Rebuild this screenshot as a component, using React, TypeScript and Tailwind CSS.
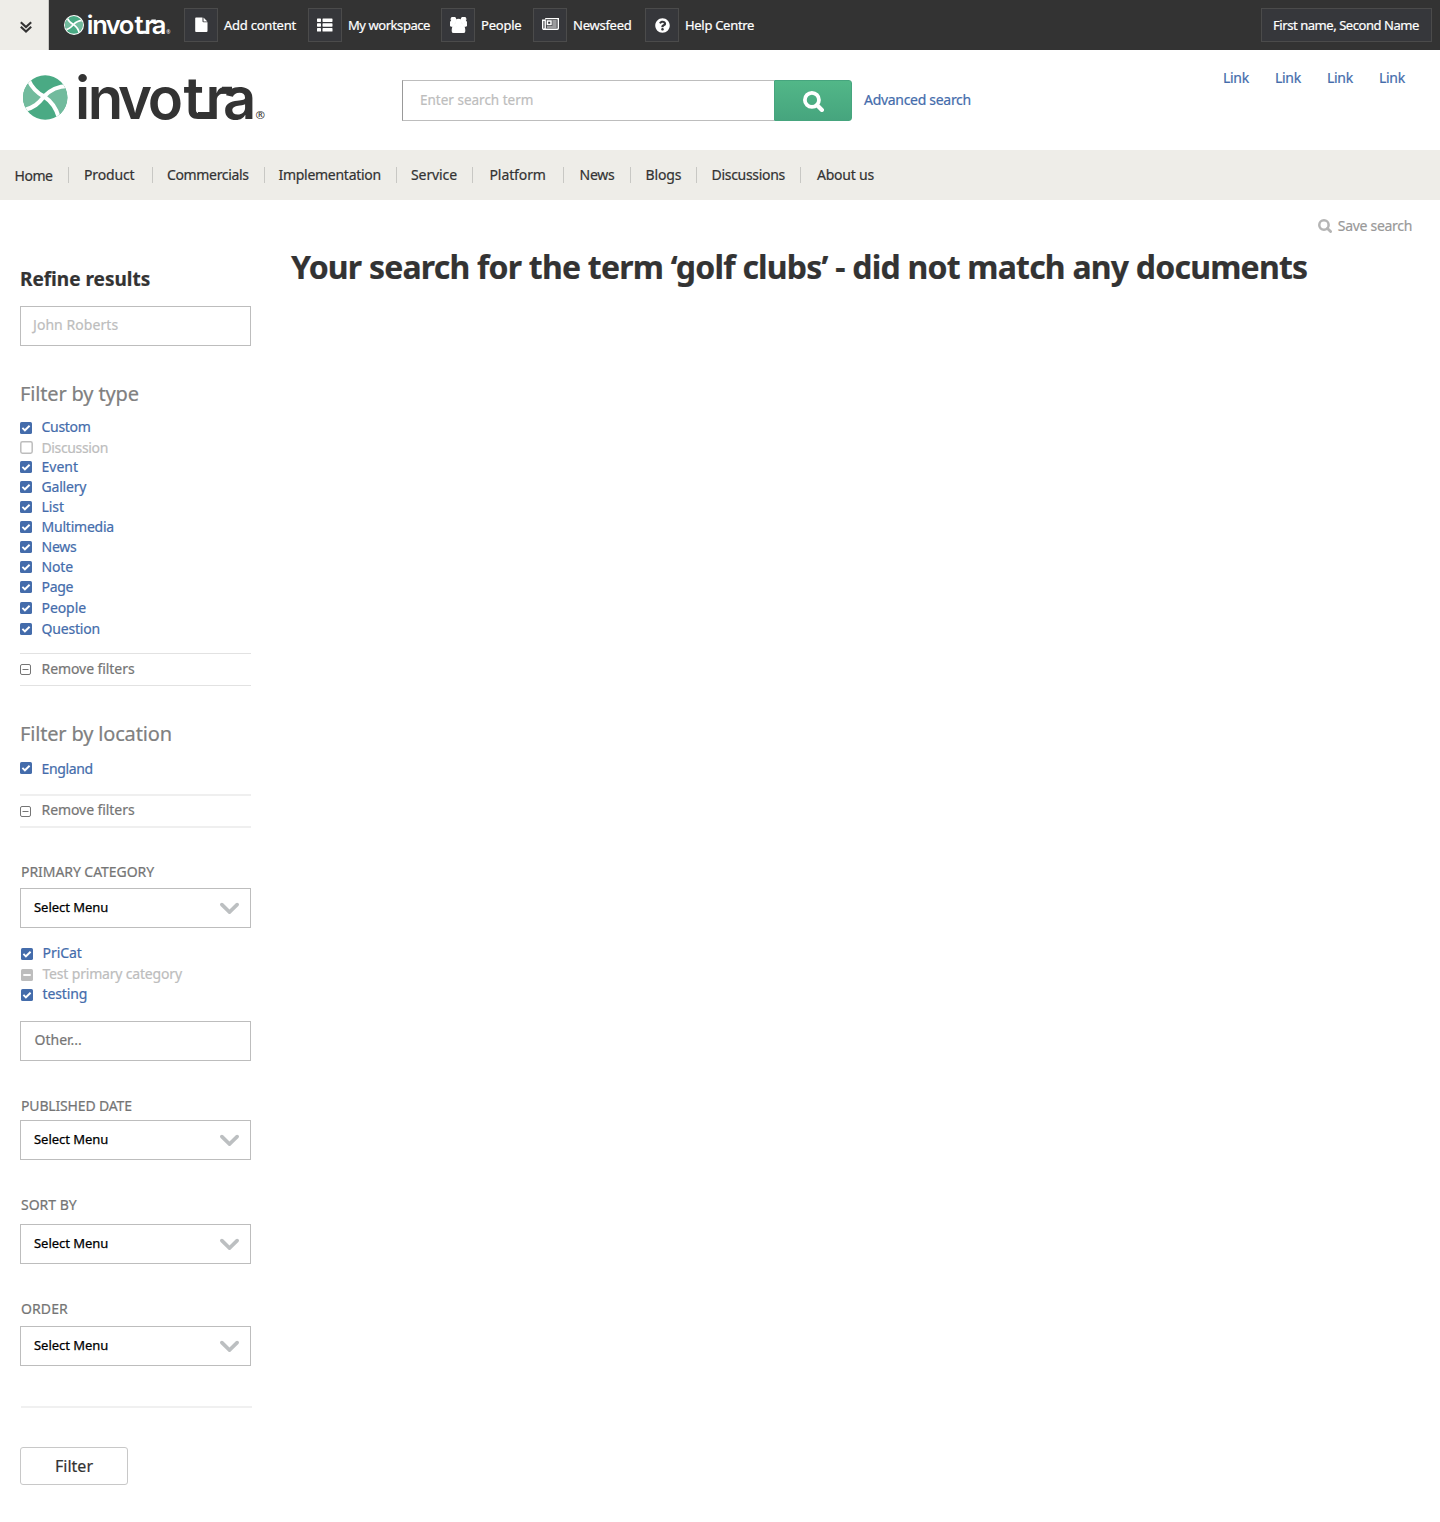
import type { ReactNode } from 'react';
import { FaQuestionCircle } from 'react-icons/fa';

type LogoMarkProps = { className: string; ring?: boolean };

function LogoMark({ className, ring }: LogoMarkProps) {
  return (
    <svg viewBox="0 0 45 45" className={className} aria-hidden="true">
      {ring && <circle cx="22.5" cy="22.5" r="22.5" fill="#fff" />}
      <g transform={ring ? 'translate(2.2 2.2) scale(.9)' : undefined}>
        <clipPath id={ring ? 'mark-sm' : 'mark-lg'}>
          <circle cx="22.2" cy="22.5" r="22.2" />
        </clipPath>
        <g clipPath={ring ? 'url(#mark-sm)' : 'url(#mark-lg)'}>
          <rect width="45" height="45" fill="#4aaa84" />
          <path d="M5 4C9 13 14 18 21 21.500C16 28 11 33 2 35L-5 36V4Z" fill="#72bb9d" />
          <path d="M46 11C34 11 27 15 21 21.500C28 26 33 32 36 42L50 42V11Z" fill="#72bb9d" />
          <path
            d="M5 4C9 13 14 18 21 21.500C28 26 33 32 36 43M46 11C34 11 27 15 21 21.500C16 28 11 33 0 35.500"
            fill="none"
            stroke="#fff"
            strokeWidth="4.200"
          />
        </g>
      </g>
    </svg>
  );
}

function Wordmark({ className }: { className: string }) {
  return (
    <svg viewBox="0 0 190 50" className={`overflow-visible [-webkit-text-stroke:0] ${className}`} fill="currentColor">
      <text
        x="-1 11.700 42 71.800 107.500 129.500 147"
        y="44.500"
        fontFamily="Inter, sans-serif"
        fontWeight="600"
        fontSize="58"
        className="[-webkit-text-stroke:1.1px]"
      >
        invotra
      </text>
      <path d="M122 41.500H135M146 16.200H156" stroke="currentColor" strokeWidth="7" />
      <text x="179.500" y="45" fontFamily="Noto Sans, sans-serif" fontSize="11.500">
        ®
      </text>
    </svg>
  );
}

function SearchIcon({ className }: { className: string }) {
  return (
    <svg viewBox="0 0 20 20" className={className} fill="none" stroke="currentColor">
      <circle cx="8.500" cy="8.500" r="6.700" strokeWidth="3.600" />
      <path d="M13.500 13.500L18 18" strokeWidth="4" strokeLinecap="round" />
    </svg>
  );
}

function CollapseIcon() {
  return (
    <svg viewBox="0 0 12 12" className="size-3" fill="none" stroke="currentColor" strokeWidth="2.100">
      <path d="M.8 1.200L6 6L11.200 1.200M.8 5.700L6 10.500L11.200 5.700" />
    </svg>
  );
}

function FileIcon() {
  return (
    <svg viewBox="0 0 13 15" className="mb-px h-[15px] w-[13px]" fill="currentColor">
      <path d="M1 .5H7.500V4.200Q7.500 5.300 8.600 5.300H12.500V14Q12.500 15 11.500 15H1Q.2 15 .2 14V1.300Q.2 .5 1 .5ZM8.500 .6L12.400 4.400H8.500Z" />
    </svg>
  );
}

function ListIcon() {
  return (
    <svg viewBox="0 0 16 14" className="h-[14px] w-4" fill="currentColor">
      {[0.5, 5.3, 10.1].map((y) => (
        <g key={y}>
          <rect x="0" y={y} width="4" height="3.400" rx=".6" />
          <rect x="5.500" y={y} width="10" height="3.400" rx=".6" />
        </g>
      ))}
    </svg>
  );
}

function NewsIcon() {
  return (
    <svg viewBox="0 0 17 12" className="mb-0.5 h-3 w-[17px]" fill="none" stroke="currentColor">
      <path d="M3.200 .6H16.300V10.300Q16.300 11.300 15.300 11.300H2Q.7 11.300 .7 10V2.200H3.200V9.800Q3.200 11.300 2 11.300" strokeWidth="1.400" />
      <rect x="5.400" y="3" width="3.600" height="3.500" strokeWidth="1.500" />
      <path d="M10.300 3H14.700M10.300 5H14.700M10.300 7H14.700M4.800 9H14.700" strokeWidth="1.200" />
    </svg>
  );
}

function UsersIcon() {
  return (
    <svg viewBox="0 0 1920 1792" className="mb-px h-[16px] w-[17px]" fill="currentColor" stroke="currentColor" strokeWidth="130">
      <path d="M593 896q-162 5-265 128h-134q-82 0-138-40.500t-56-118.500q0-353 124-353 6 0 43.500 21t97.500 42.500 119 21.500q67 0 133-23-5 37-5 66 0 139 81 256zm1071 637q0 120-73 189.500t-194 69.500h-874q-121 0-194-69.500t-73-189.500q0-53 3.500-103.500t14-109 26.500-108.500 43-97.500 62-81 85.500-53.500 111.500-20q10 0 43 21.500t73 48 107 48 135 21.500 135-21.500 107-48 73-48 43-21.500q61 0 111.500 20t85.500 53.500 62 81 43 97.500 26.500 108.500 14 109 3.500 103.500zm-1024-1277q0 106-75 181t-181 75-181-75-75-181 75-181 181-75 181 75 75 181zm704 384q0 159-112.500 271.500t-271.500 112.500-271.500-112.500-112.500-271.500 112.500-271.500 271.500-112.500 271.500 112.500 112.500 271.500zm576 225q0 78-56 118.500t-138 40.500h-134q-103-123-265-128 81-117 81-256 0-29-5-66 66 23 133 23 59 0 119-21.500t97.500-42.500 43.500-21q124 0 124 353zm-128-609q0 106-75 181t-181 75-181-75-75-181 75-181 181-75 181 75 75 181z" />
    </svg>
  );
}

const tools: { label: string; icon: ReactNode; box: string; text: string }[] = [
  { label: 'Add content', icon: <FileIcon />, box: 'w-[124px]', text: 'tracking-[-0.24px]' },
  { label: 'My workspace', icon: <ListIcon />, box: 'w-[133px]', text: 'tracking-[-0.44px]' },
  { label: 'People', icon: <UsersIcon />, box: 'w-[92px]', text: 'tracking-[-0.22px]' },
  { label: 'Newsfeed', icon: <NewsIcon />, box: 'w-[112px]', text: 'tracking-[-0.25px]' },
  { label: 'Help Centre', icon: <FaQuestionCircle className="size-[15px]" />, box: 'w-[120px]', text: 'tracking-[-0.3px]' },
];

const nav: { label: string; cell: string }[] = [
  { label: 'Home', cell: 'w-[69px] pl-[14.5px] tracking-[-0.46px]' },
  { label: 'Product', cell: 'w-[84px] pl-[15px] tracking-[-0.14px]' },
  { label: 'Commercials', cell: 'w-[112px] pl-[14px] tracking-[-0.35px]' },
  { label: 'Implementation', cell: 'w-[132px] pl-[13.5px] tracking-[-0.28px]' },
  { label: 'Service', cell: 'w-[76px] pl-[14px] tracking-[-0.1px]' },
  { label: 'Platform', cell: 'w-[91px] pl-[16.5px] tracking-[-0.1px]' },
  { label: 'News', cell: 'w-[67px] pl-[15.5px] tracking-[-0.26px]' },
  { label: 'Blogs', cell: 'w-[66px] pl-[14.5px] tracking-[-0.15px]' },
  { label: 'Discussions', cell: 'w-[104px] pl-[14.5px] tracking-[-0.3px]' },
  { label: 'About us', cell: 'w-[90px] pl-[16px] tracking-[-0.22px]' },
];

type BoxState = 'on' | 'off' | 'mixed';

function Check({ state, className = '' }: { state: BoxState; className?: string }) {
  if (state === 'off')
    return (
      <svg viewBox="0 0 13 13" className={`size-[13px] shrink-0 ${className}`}>
        <rect x=".8" y=".8" width="11.400" height="11.400" rx="1.600" fill="none" stroke="#bdbdbd" strokeWidth="1.500" />
      </svg>
    );
  return (
    <svg viewBox="0 0 12 12" className={`mr-px size-3 shrink-0 ${className}`}>
      <rect width="12" height="12" rx="1.6" fill={state === 'on' ? '#446cab' : '#bdbdbd'} />
      <path d={state === 'on' ? 'M2.400 5.800L4.900 8.300L9.600 3.700' : 'M2.300 6H9.700'} fill="none" stroke="#fff" strokeWidth="1.900" />
    </svg>
  );
}

const types: { label: string; state?: BoxState; row?: string; box?: string; text?: string }[] = [
  { label: 'Custom', box: 'mt-0.5', text: 'tracking-[-0.3px]' },
  { label: 'Discussion', state: 'off', row: 'mt-px', box: '-mt-px', text: 'tracking-[-0.36px]' },
  { label: 'Event', row: '-mt-px' },
  { label: 'Gallery', text: 'tracking-[-0.18px]' },
  { label: 'List', text: 'tracking-[-0.05px]' },
  { label: 'Multimedia', text: 'tracking-[-0.22px]' },
  { label: 'News', text: 'tracking-[-0.24px]' },
  { label: 'Note', text: 'tracking-[-0.14px]' },
  { label: 'Page', text: 'tracking-[-0.34px]' },
  { label: 'People', row: 'mt-px', text: 'tracking-[-0.08px]' },
  { label: 'Question', row: 'mt-px', text: 'tracking-[-0.19px]' },
];

function Option({ label, state = 'on', row = '', box = '', text = '' }: (typeof types)[number]) {
  return (
    <li className={`flex h-5 items-center gap-[8.5px] ${row} ${state === 'on' ? 'text-[#446cab]' : 'text-[#bdbdbd]'}`}>
      <Check state={state} className={box} />
      <span className={text}>{label}</span>
    </li>
  );
}

function RemoveFilters({ className, iconClassName = '' }: { className: string; iconClassName?: string }) {
  return (
    <button className={`flex w-[231px] items-center gap-[10.5px] text-[#757575] ${className}`}>
      <svg viewBox="0 0 11 11" className={`size-[11px] ${iconClassName}`} fill="none" stroke="#757575">
        <rect x=".5" y=".5" width="10" height="10" rx="1.500" />
        <path d="M2.500 5.500H8.500" />
      </svg>
      <span className="tracking-[-0.07px]">Remove filters</span>
    </button>
  );
}

function SelectMenu({ className }: { className: string }) {
  return (
    <button
      className={`flex h-10 w-[231px] items-center justify-between border border-[#bdbdbd] pr-[11px] pl-[13px] text-[13px] text-black [-webkit-text-stroke:0.25px] ${className}`}
    >
      <span className="-mt-[2px] tracking-[-0.04px]">Select Menu</span>
      <svg viewBox="0 0 19 12" className="h-3 w-[19px]" fill="none" stroke="#bcbfc1" strokeWidth="3.600" strokeLinecap="round">
        <path d="M1.900 2.600L9.500 10.100L17.100 2.600" />
      </svg>
    </button>
  );
}

function Label({ children, className }: { children: string; className: string }) {
  return <h3 className={`pl-px text-[#757575] ${className}`}>{children}</h3>;
}

export default function App() {
  return (
    <div className="min-h-[1522px] bg-white font-['Noto_Sans',sans-serif] text-[14px] leading-5 text-[#333] [-webkit-text-stroke:0.2px]">
      <div className="flex h-[50px] items-center bg-[#333] text-[13px] text-white">
        <button className="flex h-full w-[49px] items-center justify-center border-r border-[#c9c8c4] bg-[#eeede8] pt-[3px] pl-[3px] text-[#333]">
          <CollapseIcon />
        </button>
        <div className="flex w-[135px] items-center pl-[15px]">
          <LogoMark ring className="size-5" />
          <Wordmark className="ml-[3px] h-[22px] w-[84px]" />
        </div>
        {tools.map((t) => (
          <button key={t.label} className={`flex items-center gap-1.5 ${t.box}`}>
            <span className="flex size-[34px] shrink-0 items-center justify-center border border-[#4b4b4b] bg-[#36373b]">{t.icon}</span>
            <span className={`whitespace-nowrap ${t.text}`}>{t.label}</span>
          </button>
        ))}
        <button className="mr-2 ml-auto h-[34px] w-[171px] border border-[#4b4b4b] bg-[#36373b] pl-[11px] text-left tracking-[-0.44px] whitespace-nowrap">
          First name, Second Name
        </button>
      </div>

      <header className="flex h-[100px] items-start">
        <div className="flex w-[402px] pt-[25px] pl-[23px]">
          <LogoMark className="size-[45px]" />
          <Wordmark className="ml-2 -mt-px h-[50px] w-[190px]" />
        </div>
        <form className="mt-[30px] flex h-[41px] items-center">
          <div className="flex h-full w-[372px] items-center border border-r-0 border-[#bdbdbd] border-l-[#999] pb-[2px] pl-[17px] text-[13.5px] text-[#bdbdbd]">
            Enter search term
          </div>
          <button
            type="button"
            className="flex h-full w-[78px] items-center justify-center rounded-r-[3px] border border-[#46a57e] bg-linear-to-b from-[#52b788] to-[#46a57e] text-white"
          >
            <SearchIcon className="mt-px size-[21px]" />
          </button>
          <a className="-mt-[2px] ml-3 tracking-[-0.3px] text-[#446cab]">Advanced search</a>
        </form>
        <nav className="mt-[18px] mr-[35px] ml-auto flex gap-[26px] text-[#446cab]">
          {[1, 2, 3, 4].map((n) => (
            <a key={n} className="w-[26px] tracking-[-0.3px]">
              Link
            </a>
          ))}
        </nav>
      </header>

      <nav className="flex h-[50px] items-center bg-[#eeede8]">
        {nav.map((n, i) => (
          <div key={n.label} className={`flex items-center justify-between whitespace-nowrap ${n.cell}`}>
            <a className={i === 0 ? 'translate-y-px' : ''}>{n.label}</a>
            {i < nav.length - 1 && <span className="h-4 w-px bg-[#c8c8c4]" />}
          </div>
        ))}
      </nav>

      <div className="flex">
        <aside className="w-[291px] pl-5">
          <h2 className="mt-[68px] h-[22px] text-[19px] leading-[22px] font-bold">Refine results</h2>
          <div className="mt-4 flex h-10 w-[231px] items-center border border-[#bdbdbd] pb-[2px] pl-3 tracking-[0.06px] text-[#bdbdbd]">
            John Roberts
          </div>

          <h2 className="mt-[36px] h-[24px] text-[20px] leading-6 tracking-[-0.15px] text-[#808080]">Filter by type</h2>
          <ul className="mt-[11px]">
            {types.map((t) => (
              <Option key={t.label} {...t} />
            ))}
          </ul>
          <RemoveFilters className="mt-[14px] h-[33px] border-y border-[#e2e2e2] pb-px" />

          <h2 className="mt-[36px] h-[24px] text-[20px] leading-6 tracking-[-0.17px] text-[#808080]">Filter by location</h2>
          <ul className="mt-[13px]">
            <Option label="England" box="-mt-0.5" text="tracking-[-0.36px]" />
          </ul>
          <RemoveFilters className="mt-[15px] h-[34px] border-y-2 border-[#efefef] pb-[2px]" iconClassName="mt-[3px]" />

          <Label className="mt-[34px] tracking-[-0.06px]">PRIMARY CATEGORY</Label>
          <SelectMenu className="mt-[6px]" />
          <ul className="mt-[15px] pl-px">
            <Option label="PriCat" box="mt-px" text="tracking-[-0.04px]" />
            <Option label="Test primary category" state="mixed" row="mt-px" box="mt-px" text="tracking-[-0.18px]" />
            <Option label="testing" box="mt-px" text="tracking-[-0.1px]" />
          </ul>
          <div className="mt-[17px] flex h-10 w-[231px] items-center border border-[#bdbdbd] pb-[2px] pl-[13.5px] text-[#757575]">
            Other...
          </div>

          <Label className="mt-[35px] tracking-[-0.16px]">PUBLISHED DATE</Label>
          <SelectMenu className="mt-[4px]" />
          <Label className="mt-[35px]">SORT BY</Label>
          <SelectMenu className="mt-[9px]" />
          <Label className="mt-[35px] tracking-[0.1px]">ORDER</Label>
          <SelectMenu className="mt-[7px]" />

          <hr className="mt-10 ml-px w-[231px] border-t-2 border-[#f0f0f0]" />
          <button className="mt-[39px] flex h-[38px] w-[108px] items-center justify-center rounded-[3px] border border-[#c8c8c8] text-[16px]">
            Filter
          </button>
        </aside>

        <main className="flex-1">
          <div className="mt-4 mr-7 flex items-center justify-end gap-1.5 text-[#999]">
            <SearchIcon className="size-[14px] text-[#b5b5b5]" />
            <span className="tracking-[-0.3px]">Save search</span>
          </div>
          <h1 className="mt-[11px] text-[32px] leading-10 font-bold tracking-[-0.79px] whitespace-nowrap">
            Your search for the term ‘golf clubs’ - did not match any documents
          </h1>
        </main>
      </div>
    </div>
  );
}
